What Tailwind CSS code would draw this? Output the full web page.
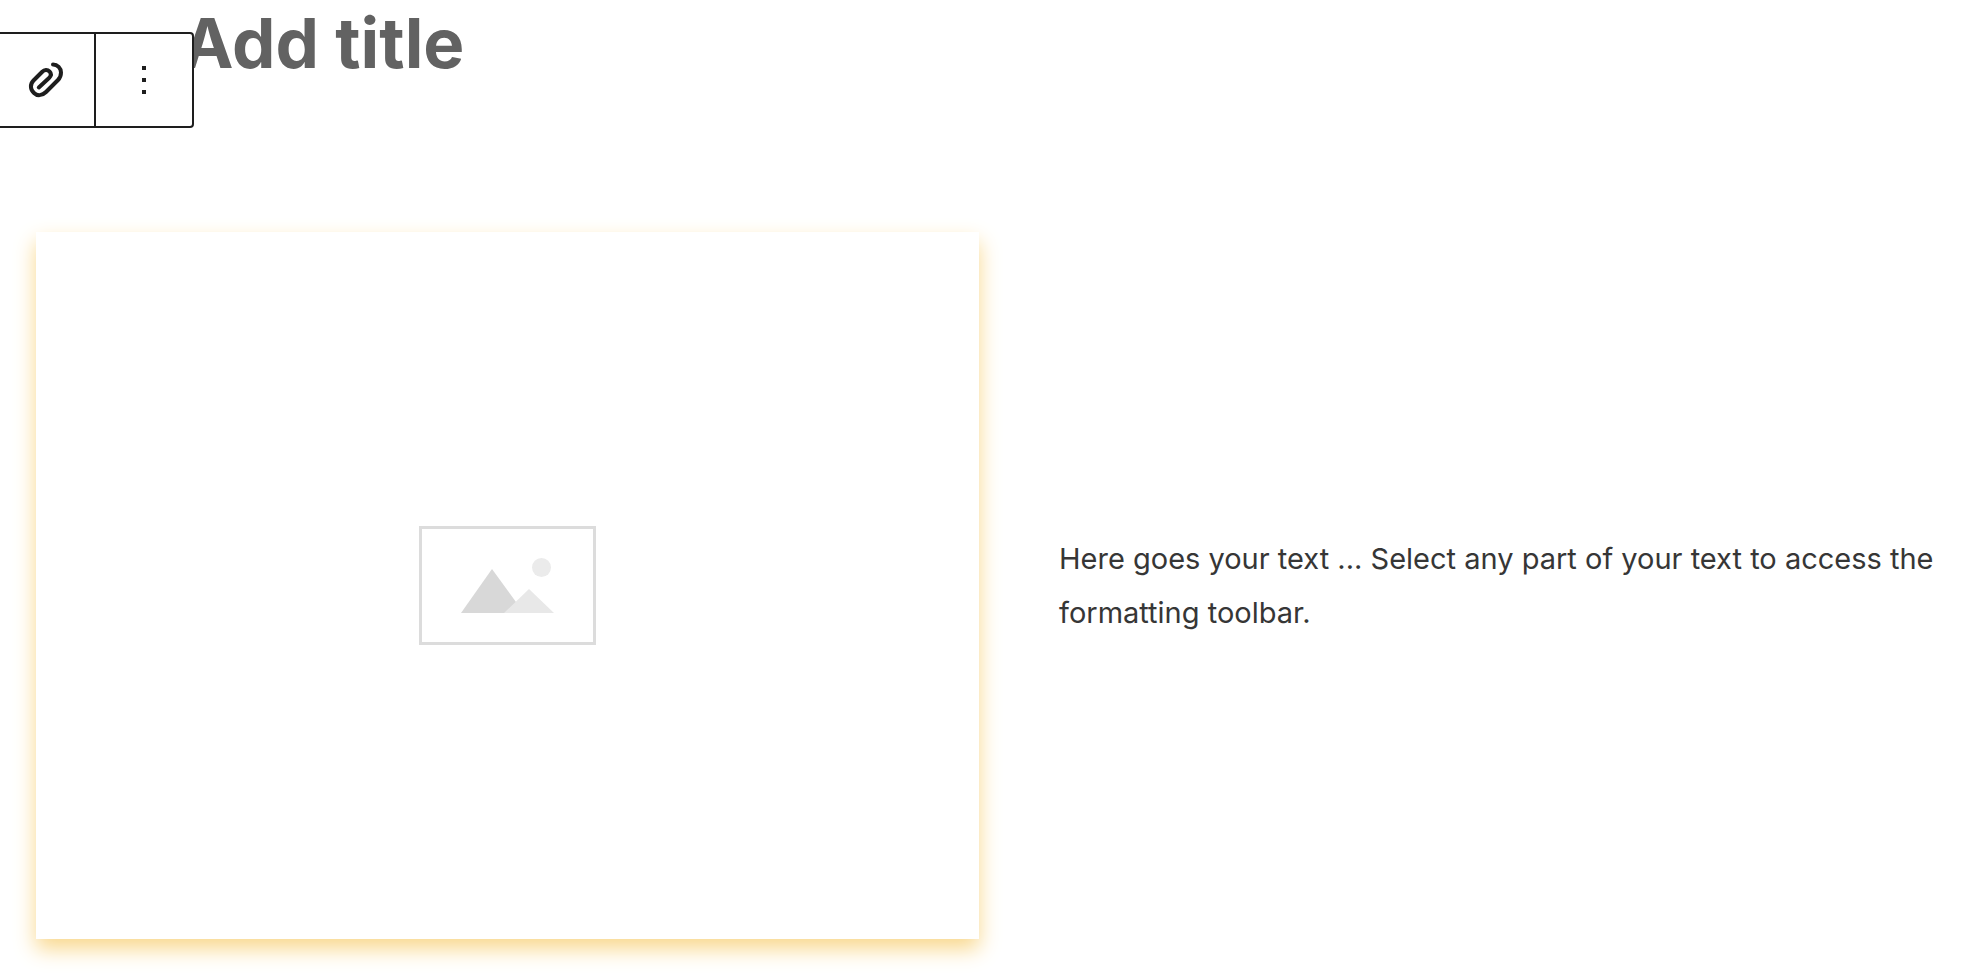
<!DOCTYPE html>
<html lang="en">
<head>
<meta charset="utf-8">
<title>Add title</title>
<script src="https://cdn.jsdelivr.net/npm/@tailwindcss/browser@4"></script>
</head>
<body class="min-h-screen overflow-x-hidden bg-white font-['Inter','Liberation_Sans',sans-serif]">
  <header class="relative h-[232px] pl-[182px]">
    <input type="text" aria-label="Post title" placeholder="Add title" class="block h-[88px] w-full text-[69px] font-bold text-[#1e1e1e] outline-none placeholder:text-[#626262]">
    <div role="toolbar" aria-label="Block tools" class="absolute top-8 left-0 flex h-24 w-[194px] rounded-r-[4px] border-y-2 border-r-2 border-[#1e1e1e] bg-white">
      <button type="button" aria-label="Attach link" class="flex flex-1 items-center justify-center border-r-2 border-[#1e1e1e]">
        <svg class="size-12" viewBox="23 56 48 48" fill="none" stroke="#1e1e1e" stroke-width="4" stroke-linecap="round" stroke-linejoin="round" aria-hidden="true">
          <path d="M53 64.5C57.5 64.5 61 68 61 72.5C61 75.5 60 78 58 80L46 92C42 96 37 96 34 93C30 89.5 30 84 33.5 80.5L42 72C44.5 69.5 47.5 69.5 49.5 71.5C51.5 73.5 51.5 75.5 49 78L38.8 87.5"/>
        </svg>
      </button>
      <button type="button" aria-label="Options" class="flex w-24 items-center justify-center">
        <svg class="size-12" viewBox="0 0 48 48" fill="#1e1e1e" aria-hidden="true">
          <path d="M22 10h4v4h-4zM22 22h4v4h-4zM22 34h4v4h-4z"/>
        </svg>
      </button>
    </div>
  </header>
  <main class="grid grid-cols-[943fr_925fr] items-center gap-x-20 pl-9">
    <figure class="flex aspect-[943/707] items-center justify-center bg-white shadow-[0_10px_20px_#f9d88d]">
      <svg class="h-[119px] w-[177px]" viewBox="0 0 177 119" role="img" aria-label="Image placeholder">
        <rect x="1.5" y="1.5" width="174" height="116" fill="none" stroke="#dcdcdc" stroke-width="3"/>
        <path d="M42 87L73 43L105 87Z" fill="#d8d8d8"/>
        <path d="M85 87L110 63L135 87Z" fill="#e8e8e8"/>
        <circle cx="122.500" cy="41.500" r="9.500" fill="#ebebeb"/>
      </svg>
    </figure>
    <p class="text-[29px] leading-[54px] text-[#363636]">Here goes your text ... Select any part of your text to access the formatting toolbar.</p>
  </main>
</body>
</html>
